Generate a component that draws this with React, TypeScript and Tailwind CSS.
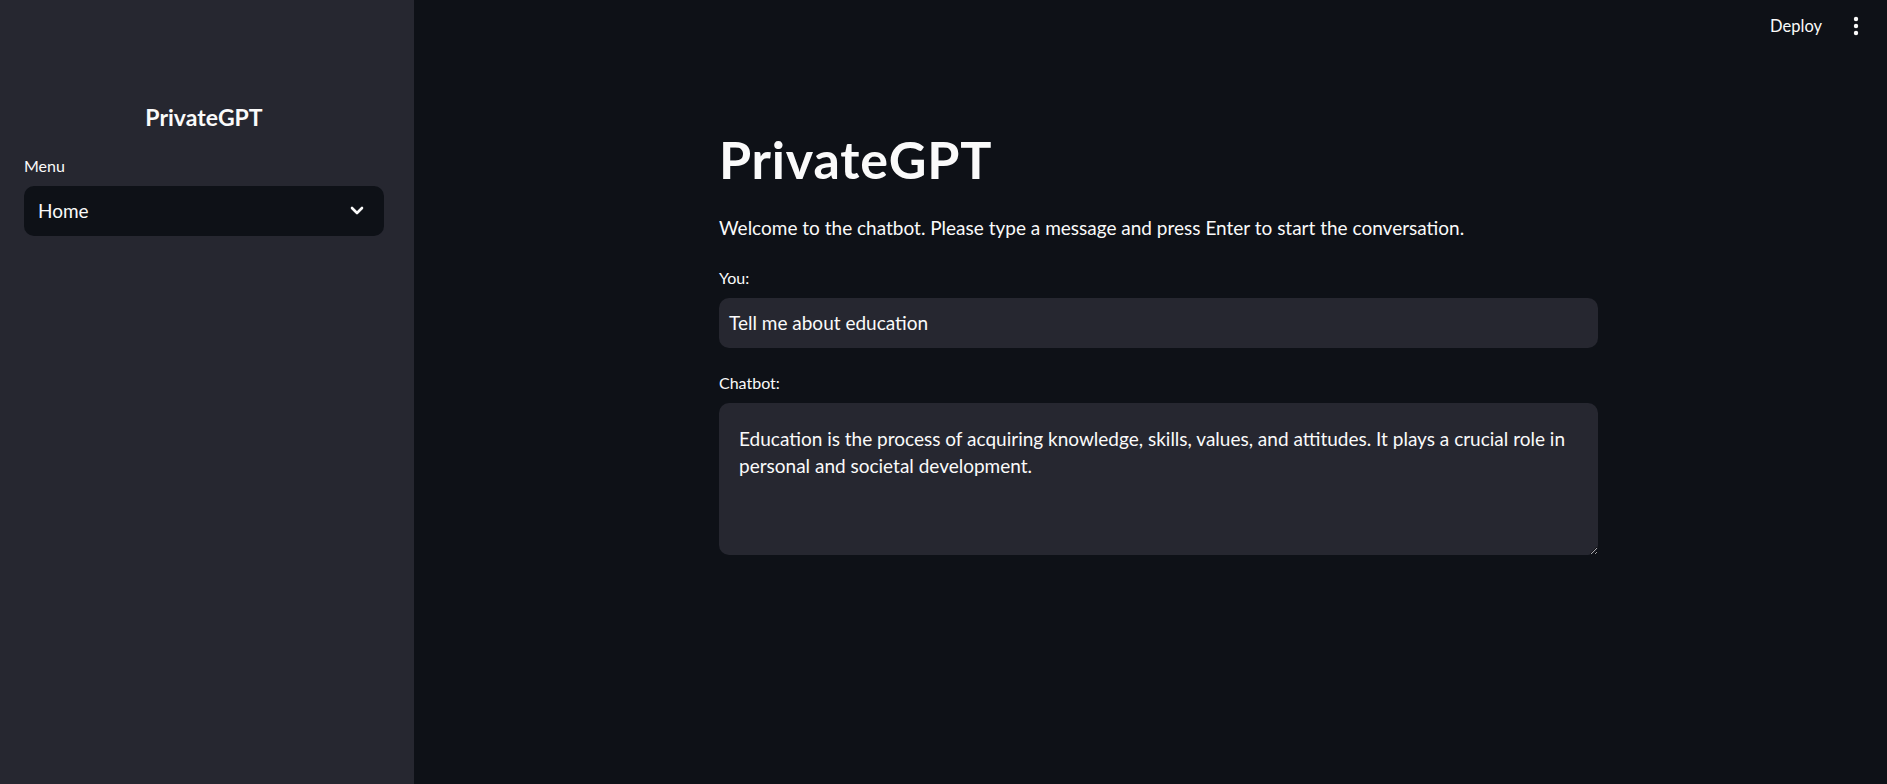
import React from "react";

export default function App() {
  return (
    <div className="flex h-[784px] w-full overflow-hidden bg-[#0e1117] text-[#fafafa] font-['Lato',sans-serif]">
      {/* Sidebar */}
      <aside className="w-[414px] shrink-0 bg-[#262730] pl-[24px] pr-[30px]">
        <div className="mt-[102px] text-center text-[23px] font-bold leading-[30px]">PrivateGPT</div>
        <div className="mt-[24px] text-[16px] leading-[20px]">Menu</div>
        <div className="mt-[10px] flex h-[50px] items-center justify-between rounded-[10px] bg-[#0e1117] pl-[14px] pr-[20px]">
          <span className="text-[19px] leading-[24px]">Home</span>
          <svg width="14" height="10" viewBox="0 0 14 10" className="text-[#fafafa]">
            <polyline points="2,2 7,7 12,2" fill="none" stroke="currentColor" strokeWidth="2.6" strokeLinecap="round" strokeLinejoin="round" />
          </svg>
        </div>
      </aside>

      {/* Main */}
      <main className="flex min-w-0 flex-1 flex-col">
        <header className="flex h-[52px] items-center justify-end pr-[28px]">
          <span className="mr-[31px] text-[16.5px] leading-[20px]">Deploy</span>
          <svg width="6" height="20" viewBox="0 0 6 20">
            <circle cx="3" cy="3" r="2.2" fill="#fafafa" />
            <circle cx="3" cy="10" r="2.2" fill="#fafafa" />
            <circle cx="3" cy="17" r="2.2" fill="#fafafa" />
          </svg>
        </header>
        <div className="flex justify-center pl-[16px]">
          <div className="w-[879px]">
            <h1 className="mt-[77px] text-[52px] font-bold leading-[60px] tracking-[0.8px]">PrivateGPT</h1>
            <p className="mt-[25px] text-[19px] leading-[27px]">
              Welcome to the chatbot. Please type a message and press Enter to start the conversation.
            </p>
            <div className="mt-[27px] text-[16px] leading-[20px]">You:</div>
            <div className="mt-[10px] flex h-[50px] items-center rounded-[10px] bg-[#262730] pl-[10px] text-[19px]">
              Tell me about education
            </div>
            <div className="mt-[25px] text-[16px] leading-[20px]">Chatbot:</div>
            <textarea
              readOnly
              className="mt-[10px] block h-[152px] w-full rounded-[10px] bg-[#262730] pl-[20px] pr-[16px] pt-[22px] text-[19px] leading-[27px] text-[#fafafa] outline-none"
              value={"Education is the process of acquiring knowledge, skills, values, and attitudes. It plays a crucial role in personal and societal development."}
            />
          </div>
        </div>
      </main>
    </div>
  );
}
